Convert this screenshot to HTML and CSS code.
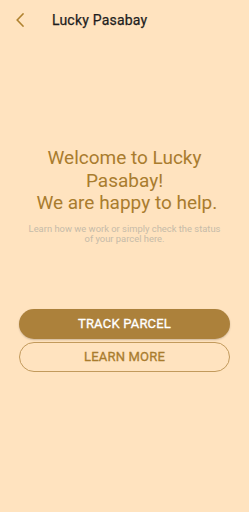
FILE: index.html
```html
<!DOCTYPE html>
<html>
<head>
    <meta charset="UTF-8">
    <meta name="viewport" content="width=device-width, initial-scale=1.0">
    <title>Lucky Pasabay</title>
    <link rel="stylesheet" href="styles.css">
</head>
<body>
    <div class="screen">
        <div class="toolbar">
            <button class="back" aria-label="Back">
                <svg width="8" height="14" viewBox="0 0 8 14">
                    <path d="M7 1 L1.2 7 L7 13" fill="none" stroke="#b0822f" stroke-width="1.6" stroke-linecap="square"/>
                </svg>
            </button>
            <h1 class="title">Lucky Pasabay</h1>
        </div>

        <div class="welcome">
            <h2 class="headline">Welcome to Lucky<br>Pasabay!<br>&nbsp;We are happy to help.</h2>
            <p class="intro">Learn how we work or simply check the status<br>of your parcel here.</p>
        </div>

        <div class="actions">
            <button class="btn btn-filled">TRACK PARCEL</button>
            <button class="btn btn-outline">LEARN MORE</button>
        </div>
    </div>
</body>
</html>
```

FILE: styles.css
```css
html, body {
    margin: 0;
    padding: 0;
    background-color: #ffe3bf;
}
body {
    font-family: Roboto, "Liberation Sans", sans-serif;
    color: #222;
}
.screen {
    width: 249px;
    height: 512px;
    display: flex;
    flex-direction: column;
}
.toolbar {
    height: 40px;
    display: flex;
    align-items: center;
}
.back {
    width: 52px;
    height: 40px;
    padding: 0 0 0 16px;
    margin: 0;
    border: none;
    background: none;
    display: flex;
    align-items: center;
}
.title {
    margin: 0;
    font-size: 14px;
    font-weight: 400;
    color: #1e1e1e;
    letter-spacing: 0.2px;
    -webkit-text-stroke: 0.25px #1e1e1e;
}
.welcome {
    margin-top: 107px;
    text-align: center;
}
.headline {
    margin: 0;
    font-size: 19px;
    font-weight: 400;
    line-height: 22.5px;
    color: #a97c2e;
}
.intro {
    margin: 9px 0 0;
    font-size: 9.4px;
    line-height: 10.5px;
    color: #c6bba9;
}
.actions {
    margin: 64px 19px 0;
    display: flex;
    flex-direction: column;
    gap: 3px;
}
.btn {
    height: 30px;
    border-radius: 15px;
    font-family: Roboto, "Liberation Sans", sans-serif;
    font-size: 13px;
    font-weight: 400;
    letter-spacing: 0.2px;
    padding: 0;
    cursor: pointer;
}
.btn-filled {
    background-color: #ac813b;
    color: #fff;
    border: none;
    box-shadow: 0 1px 2px rgba(0,0,0,0.2);
    -webkit-text-stroke: 0.3px #fff;
}
.btn-outline {
    background: transparent;
    color: #a97c2e;
    border: 1px solid #c29a5c;
    -webkit-text-stroke: 0.3px #a97c2e;
}
```
